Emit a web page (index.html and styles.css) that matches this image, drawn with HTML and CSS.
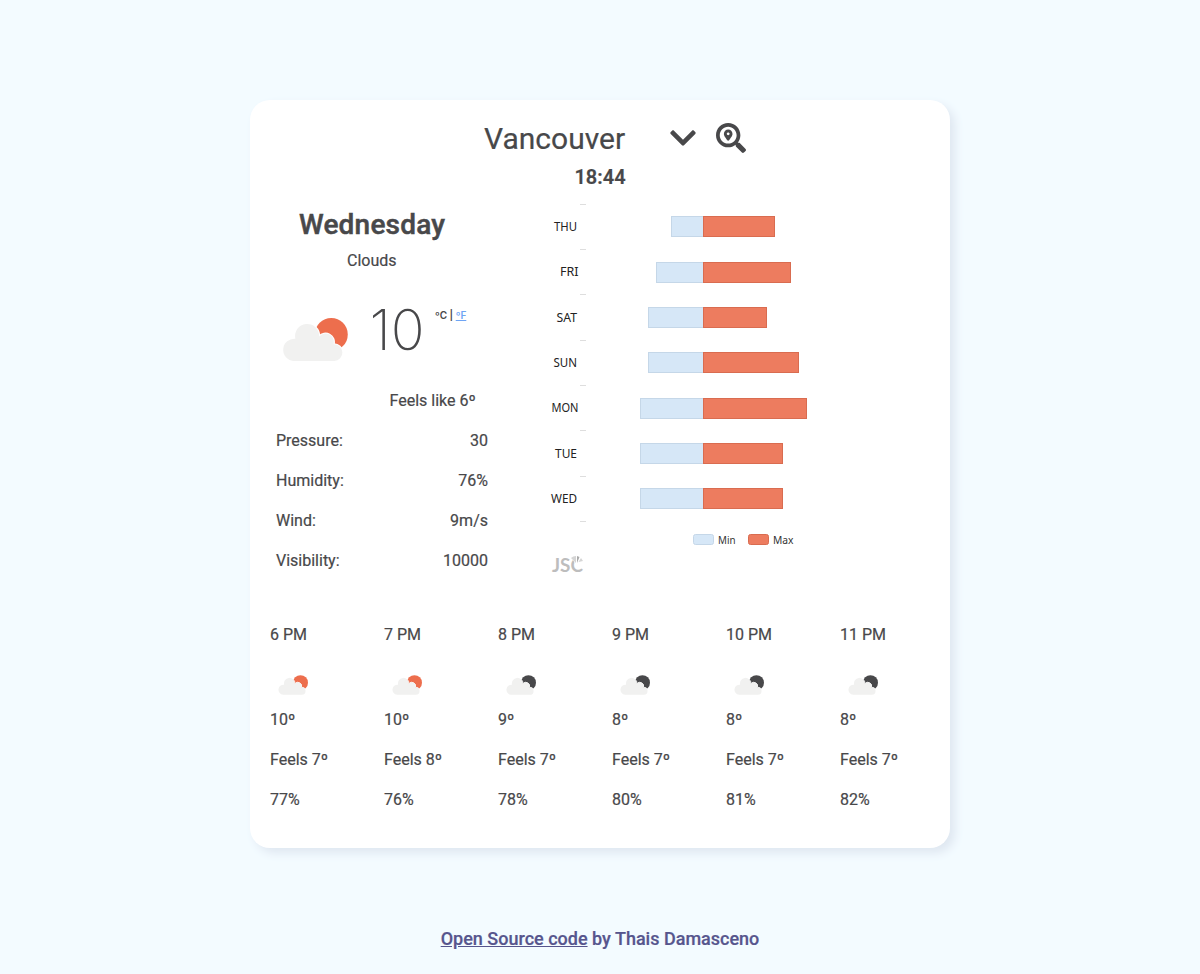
FILE: index.html
```
<!DOCTYPE html>
<html lang="en">
<head>
<meta charset="utf-8">
<title>Weather</title>
<link rel="stylesheet" href="styles.css">
</head>
<body>
<svg class="symbols" width="0" height="0">
  <symbol id="cloud" viewBox="36 39 195 128">
    <circle class="orb" cx="182" cy="88" r="49"/>
    <path class="cloud" d="M69 167H191A25 25 0 0 0 189 117A25 25 0 0 0 146 94A36 36 0 1 0 75 101A33 33 0 0 0 69 167Z"/>
  </symbol>
</svg>
<main class="card">
  <header class="header">
    <h1 class="city">Vancouver</h1>
    <svg class="chevron" viewBox="0 0 448 512"><path d="M207.029 381.476L12.686 187.132c-9.373-9.373-9.373-24.569 0-33.941l22.667-22.667c9.357-9.357 24.522-9.375 33.901-.04L224 284.505l154.745-154.021c9.379-9.335 24.544-9.317 33.901.04l22.667 22.667c9.373 9.373 9.373 24.569 0 33.941L240.971 381.476c-9.373 9.372-24.569 9.372-33.942 0z"/></svg>
    <svg class="search" viewBox="0 0 512 512"><path d="M505.04 442.66l-99.71-99.69c-4.5-4.5-10.6-7-17-7h-16.3c27.6-35.3 44-79.69 44-127.99C416.03 93.09 322.92 0 208.02 0S0 93.09 0 207.98s93.11 207.98 208.02 207.98c48.3 0 92.71-16.4 128.01-44v16.3c0 6.4 2.5 12.5 7 17l99.71 99.69c9.4 9.4 24.6 9.4 33.9 0l28.3-28.3c9.4-9.4 9.4-24.59.1-33.99zm-297.02-90.7c-79.54 0-144-64.34-144-143.98 0-79.53 64.35-143.98 144-143.98 79.54 0 144 64.34 144 143.98 0 79.53-64.35 143.98-144 143.98zm.02-239.96c-40.78 0-73.84 33.05-73.84 73.83 0 32.96 48.26 93.05 66.75 114.86a9.24 9.24 0 0 0 14.18 0c18.49-21.81 66.75-81.89 66.75-114.86 0-40.78-33.06-73.83-73.84-73.83zm0 96c-13.26 0-24-10.75-24-24 0-13.26 10.75-24 24-24s24 10.74 24 24c0 13.25-10.75 24-24 24z"/></svg>
  </header>
  <div class="time">18:44</div>
  <div class="middle">
    <section class="today">
      <h2 class="day">Wednesday</h2>
      <div class="sky">Clouds</div>
      <div class="now">
        <svg class="now-icon"><use href="#cloud"/></svg>
        <div class="temp">10</div>
        <div class="units">ºC | <a href="#">ºF</a></div>
      </div>
      <div class="feels">Feels like 6º</div>
      <dl class="details">
        <div><dt>Pressure:</dt><dd>30</dd></div>
        <div><dt>Humidity:</dt><dd>76%</dd></div>
        <div><dt>Wind:</dt><dd>9m/s</dd></div>
        <div><dt>Visibility:</dt><dd>10000</dd></div>
      </dl>
    </section>
    <svg class="chart" viewBox="540 200 390 380">
      <path class="ticks" d="M580 204.5h6M580 249.5h6M580 294.5h6M580 340.5h6M580 385.5h6M580 430.5h6M580 476.5h6M580 521.5h6"/>
      <g class="labels">
        <text x="554" y="231" textLength="23" lengthAdjust="spacingAndGlyphs">THU</text><text x="560" y="276" textLength="18.5" lengthAdjust="spacingAndGlyphs">FRI</text><text x="556.5" y="322" textLength="20.5" lengthAdjust="spacingAndGlyphs">SAT</text><text x="553.5" y="367" textLength="23.5" lengthAdjust="spacingAndGlyphs">SUN</text><text x="551.5" y="412" textLength="27" lengthAdjust="spacingAndGlyphs">MON</text><text x="555" y="458" textLength="22" lengthAdjust="spacingAndGlyphs">TUE</text><text x="551" y="503" textLength="26" lengthAdjust="spacingAndGlyphs">WED</text>
      </g>
      <g class="min">
        <rect x="671.5" y="216.5" width="32" height="20"/><rect x="656.5" y="262.5" width="47" height="20"/><rect x="648.5" y="307.5" width="55" height="20"/><rect x="648.5" y="352.5" width="55" height="20"/><rect x="640.5" y="398.5" width="63" height="20"/><rect x="640.5" y="443.5" width="63" height="20"/><rect x="640.5" y="488.5" width="63" height="20"/>
        <rect x="693.5" y="534.5" width="20" height="10" rx="2"/>
      </g>
      <g class="max">
        <rect x="703.5" y="216.5" width="71" height="20"/><rect x="703.5" y="262.5" width="87" height="20"/><rect x="703.5" y="307.5" width="63" height="20"/><rect x="703.5" y="352.5" width="95" height="20"/><rect x="703.5" y="398.5" width="103" height="20"/><rect x="703.5" y="443.5" width="79" height="20"/><rect x="703.5" y="488.5" width="79" height="20"/>
        <rect x="748.5" y="534.5" width="20" height="10" rx="2"/>
      </g>
      <g class="legend"><text x="718" y="544" textLength="17.5" lengthAdjust="spacingAndGlyphs">Min</text><text x="773" y="544" textLength="20.5" lengthAdjust="spacingAndGlyphs">Max</text></g>
      <text class="brand" x="552" y="572" textLength="31" lengthAdjust="spacingAndGlyphs">JSC</text>
      <path class="gap" d="M576 565L570 555H586V563Z"/>
      <path class="wedge" d="M576 563L571 558Q573 556 576 556Z"/><path class="wedge dark" d="M577 563V556L579.5 557Z"/><path class="wedge" d="M578.5 562L581 558L583 561Z"/>
    </svg>
  </div>
  <section class="hours">
    <div class="hour"><b>6 PM</b><svg><use href="#cloud"/></svg><span>10º</span><span>Feels 7º</span><span>77%</span></div>
    <div class="hour"><b>7 PM</b><svg><use href="#cloud"/></svg><span>10º</span><span>Feels 8º</span><span>76%</span></div>
    <div class="hour night"><b>8 PM</b><svg><use href="#cloud"/></svg><span>9º</span><span>Feels 7º</span><span>78%</span></div>
    <div class="hour night"><b>9 PM</b><svg><use href="#cloud"/></svg><span>8º</span><span>Feels 7º</span><span>80%</span></div>
    <div class="hour night"><b>10 PM</b><svg><use href="#cloud"/></svg><span>8º</span><span>Feels 7º</span><span>81%</span></div>
    <div class="hour night"><b>11 PM</b><svg><use href="#cloud"/></svg><span>8º</span><span>Feels 7º</span><span>82%</span></div>
  </section>
</main>
<footer class="footer"><a href="#">Open Source code</a> by Thais Damasceno</footer>
</body>
</html>
```
FILE: styles.css
```
* { box-sizing: border-box; }
body {
  margin: 0;
  height: 974px;
  padding-top: 100px;
  overflow: hidden;
  background: #f3fbff;
  color: #48484a;
  font: 16px/40px Roboto, sans-serif;
  -webkit-text-stroke: 0.2px;
}
.symbols { display: block; }
.card {
  width: 700px;
  height: 748px;
  margin: 0 auto;
  padding: 18px 20px 0;
  border-radius: 20px;
  background: #fff;
  box-shadow: 5px 5px 10px #dfe7f1;
}
.header { display: flex; height: 42px; padding-left: 214px; }
.header svg { fill: #48484a; height: 30px; margin-top: 4.5px; }
.city { margin: 0; width: 186px; font-size: 30px; font-weight: 400; line-height: 42px; }
.chevron { width: 26px; }
.search { width: 30px; margin-left: 20px; }
.time { height: 40px; line-height: 34px; text-align: center; font-size: 20px; font-weight: 600; }
.middle { display: flex; height: 380px; }
.today { width: 270px; flex: none; padding-top: 4px; }
.day { margin: 0 0 0 29px; font-size: 28px; font-weight: 500; letter-spacing: 0.2px; line-height: 42px; height: 37px; -webkit-text-stroke: 0.5px; }
.sky { padding-left: 77px; height: 40px; }
.now { display: flex; height: 100px; padding-left: 12px; }
.now-icon { width: 66px; height: 43px; margin-top: 37px; }
.temp { margin: 17px 0 0 21.5px; width: 66px; font: 200 56px/64px Inter, sans-serif; -webkit-text-stroke: 0; }
.units { margin-top: 24px; margin-left: -0.5px; font: 600 10px/20px Inter, sans-serif; -webkit-text-stroke: 0; }
.units a { color: #6ea4f4; }
.feels { padding-left: 119.5px; height: 40px; }
.details { margin: 0 0 0 6px; width: 212px; }
.details div { display: flex; justify-content: space-between; }
.details dd { margin: 0; }
.chart { width: 390px; height: 380px; flex: none; -webkit-text-stroke: 0; }
.ticks { stroke: #dedede; }
.labels { font: 12px "Noto Sans", sans-serif; fill: #222; }
.legend { font: 11px "Noto Sans", sans-serif; fill: #333; }
.min rect { fill: #d6e7f7; stroke: #c5d7e8; }
.max rect { fill: #ed7c5f; stroke: #d96c50; }
.brand { font: 700 19px Lato, sans-serif; fill: #bdbdbd; }
.gap { fill: #fff; }
.wedge { fill: #d5d5d5; }
.dark { fill: #aaa; }
.orb { fill: var(--orb, #ed6e4d); }
.cloud { fill: #f1f1f0; stroke: #fff; stroke-width: 6; paint-order: stroke; }
.hours { display: grid; grid-template-columns: repeat(6, 114px); padding-top: 35px; }
.hour { display: flex; flex-direction: column; }
.hour b { font-weight: 400; height: 60px; }
.hour svg { width: 30px; height: 20px; margin-left: 8px; }
.hour span { height: 40px; }
.hour svg + span { margin-top: 5px; }
.night { --orb: #48484a; }
.footer { margin-top: 71px; text-align: center; font-size: 18px; font-weight: 500; color: #56558d; }
.footer a { color: inherit; }
```
